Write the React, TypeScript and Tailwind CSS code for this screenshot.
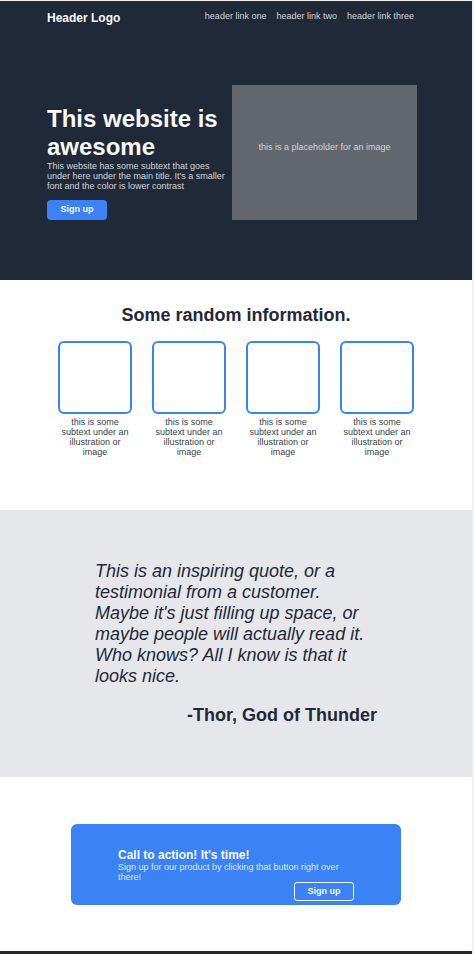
import React from "react";

const links = ["header link one", "header link two", "header link three"];

function InfoCard() {
    return (
        <div className="flex w-[74px] flex-col items-center">
            <div className="h-[73px] w-[74px] rounded-[6px] border-2 border-[#3b82f6]" />
            <p className="mt-[3px] w-[74px] text-center text-[9px] leading-[10px] text-[#374151]">
                this is some subtext under an illustration or image
            </p>
        </div>
    );
}

export default function App() {
    return (
        <div className="h-[954px] overflow-hidden bg-[#f1f1f1] pr-[2px] pt-px font-['Liberation_Sans',Arial,sans-serif]">
            {/* hero */}
            <section className="h-[279px] bg-[#1f2937] pt-[10px]">
                <div className="ml-[47px] w-[370px]">
                    <header className="flex items-start justify-between">
                        <div className="text-[12px] font-bold leading-[14px] text-[#f9fafb]">Header Logo</div>
                        <nav className="flex gap-[10px] pr-[3px] text-[9px] leading-[10px] text-[#d1d5db]">
                            {links.map((l) => (
                                <a key={l} href="#">{l}</a>
                            ))}
                        </nav>
                    </header>
                    <div className="mt-[60px] flex items-end justify-between">
                        <div className="w-[182px]">
                            <h1 className="text-[24px] font-bold leading-[28px] text-[#f9fafb]">This website is awesome</h1>
                            <p className="text-[9px] leading-[10px] text-[#d1d5db]">
                                This website has some subtext that goes under here under the main title. It's a smaller font and the color is lower contrast
                            </p>
                            <button className="mt-[9px] h-[20px] w-[60px] rounded-[4px] bg-[#3b82f6] text-[9px] font-bold text-[#f9fafb]">
                                Sign up
                            </button>
                        </div>
                        <div className="flex h-[135px] w-[185px] items-center justify-center bg-[#62666e] pb-[9px] text-[9px] text-[#d1d5db]">
                            this is a placeholder for an image
                        </div>
                    </div>
                </div>
            </section>

            {/* info */}
            <section className="h-[230px] bg-white pt-[25px]">
                <h2 className="text-center text-[18px] font-bold leading-[21px] text-[#1f2937]">Some random information.</h2>
                <div className="mt-[15px] flex justify-center gap-[20px]">
                    <InfoCard />
                    <InfoCard />
                    <InfoCard />
                    <InfoCard />
                </div>
            </section>

            {/* quote */}
            <section className="h-[267px] bg-[#e5e7eb] pt-[51px]">
                <div className="ml-[95px] w-[282px] text-[#1f2937]">
                    <p className="text-[18px] italic leading-[21px]">
                        This is an inspiring quote, or a testimonial from a customer. Maybe it's just filling up space, or maybe people will actually read it. Who knows? All I know is that it looks nice.
                    </p>
                    <p className="mt-[18px] text-right text-[18px] font-bold leading-[21px]">-Thor, God of Thunder</p>
                </div>
            </section>

            {/* call to action */}
            <section className="h-[174px] bg-white pt-[47px]">
                <div className="mx-auto flex w-[330px] flex-col rounded-[6px] bg-[#3b82f6] px-[47px] pb-[4px] pt-[24px]">
                    <h3 className="text-[12px] font-bold leading-[14px] text-[#f9fafb]">Call to action! It's time!</h3>
                    <p className="text-[9px] leading-[10px] text-[#dbeafe]">
                        Sign up for our product by clicking that button right over there!
                    </p>
                    <button className="h-[19px] w-[60px] self-end rounded-[3px] border border-[#f9fafb] text-[9px] font-bold text-[#f9fafb]">
                        Sign up
                    </button>
                </div>
            </section>

            <footer className="h-[3px] bg-[#1f2937]" />
        </div>
    );
}
